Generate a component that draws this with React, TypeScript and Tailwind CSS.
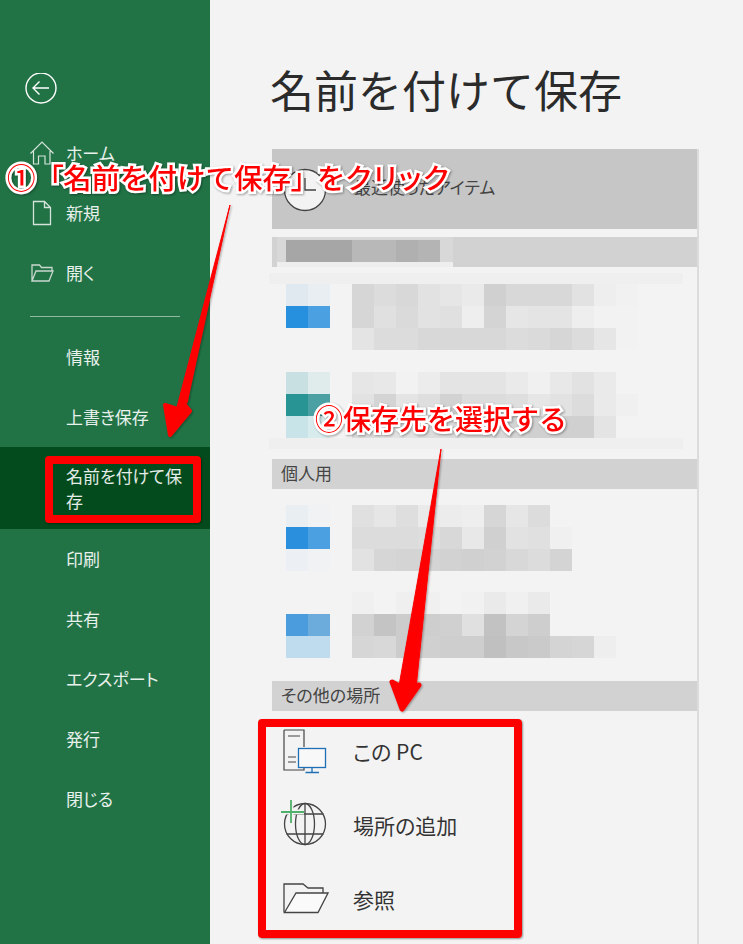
import React from 'react'

const jp = "font-['Noto_Sans_CJK_JP','Noto_Sans',sans-serif]"

const topItems = [
  { label: 'ホーム', icon: <HomeIcon /> },
  { label: '新規', icon: <FileIcon /> },
  { label: '開く', icon: <OpenIcon /> },
]
const bottomItems = ['情報', '上書き保存', '名前を付けて保存', '印刷', '共有', 'エクスポート', '発行', '閉じる']

// pixelated thumbnails and file names, values read off the screenshot
const files = [
  {
    icon: [['#e0e8f0', '#e8eef2'], ['#2690de', '#4aa0e0'], ['#f3f3f3', '#f3f3f3']],
    text: [
      ['d6', 'dc', 'd8', 'e2', 'e6', 'ea', 'd0', 'd8', 'd8', 'd8', 'e2', 'ee', 'f1'],
      ['d6', 'e0', 'da', 'e2', 'e0', 'ee', 'd4', 'e6', 'e4', 'e4', 'ee', 'f2', 'f2'],
      ['e4', 'dc', 'dc', 'd8', 'd8', 'd8', 'd8', 'dc', 'da', 'd6', 'dc', 'e6', 'f2'],
    ],
  },
  {
    icon: [['#c8e0e2', '#e0ecec'], ['#289494', '#4aa0a2'], ['#c8e4e8', '#d8ecee']],
    text: [
      ['e6', 'e8', 'f2', 'ec', 'e4', 'e4', 'e4', 'ea', 'f0', 'e8', 'e2', 'ea', 'f3'],
      ['e2', 'd4', 'e4', 'de', 'd2', 'dc', 'dc', 'de', 'e6', 'e2', 'dc', 'ea', 'f0'],
      ['dc', 'e4', 'e2', 'dc', 'dc', 'd8', 'd8', 'd4', 'd0', 'd0', 'd0', 'e4', 'f3'],
    ],
  },
  {
    icon: [['#e8eef2', '#f0f2f4'], ['#2a90de', '#4aa0e0'], ['#eceff3', '#f0f2f4']],
    text: [
      ['e0', 'e6', 'de', 'ea', 'ec', 'ee', 'd6', 'e6', 'dc'],
      ['dc', 'dc', 'dc', 'de', 'd8', 'e8', 'd0', 'e2', 'e0', 'f0'],
      ['e2', 'd6', 'd4', 'd4', 'd2', 'd0', 'd2', 'd8', 'dc', 'd4'],
    ],
  },
  {
    icon: [['#f3f3f3', '#f3f3f3'], ['#4a9cdc', '#6cacdc'], ['#bedcee', '#bedcee']],
    text: [
      ['f0', 'f3', 'ef', 'f0', 'f3', 'f1', 'ea', 'f0', 'ea'],
      ['d2', 'c4', 'cc', 'ce', 'd0', 'e0', 'c2', 'd4', 'ce'],
      ['d6', 'd8', 'cc', 'd0', 'ce', 'ce', 'c0', 'c8', 'ca', 'd4', 'd6', 'ee'],
    ],
  },
]
const headerCells = ['a6', 'a6', 'a6', 'b8', 'b8', 'b0', 'b4']

function HomeIcon() {
  return (
    <svg width="26" height="26" viewBox="0 0 26 26" fill="none" stroke="#d5e3da" strokeWidth="1.2">
      <path d="M1.5 13.5 13 2l11.5 11.5M4.500 11v13h5v-8h6.500v8h5V11" />
    </svg>
  )
}

function FileIcon() {
  return (
    <svg width="26" height="26" viewBox="0 0 26 26" fill="none" stroke="#d5e3da" strokeWidth="1.3">
      <path d="M4.500 1.500h11l6 6v17h-17zM15.500 1.500v6h6" />
    </svg>
  )
}

function OpenIcon() {
  return (
    <svg width="26" height="26" viewBox="0 0 26 26" fill="none" stroke="#c9d8ce" strokeWidth="1.3">
      <path d="M3 21V5h7.500l2 2.500H23V11M3 21h17l4-10H7z" />
    </svg>
  )
}

function ClockIcon() {
  return (
    <svg width="44" height="44" viewBox="0 0 44 44" fill="#f3f3f3" stroke="#444444" strokeWidth="1.300">
      <circle cx="22" cy="22" r="20.500" />
      <path d="M22 10v12h11" fill="none" />
    </svg>
  )
}

function PcIcon() {
  return (
    <svg width="46" height="46" viewBox="0 0 46 46" fill="none">
      <path d="M1 1h20v17M21 38v3H1V1M5 7h12M5 28h8M5 33h8" stroke="#444444" strokeWidth="1.200" />
      <rect x="15.500" y="19.500" width="27" height="19" fill="#f8f8f8" stroke="#1f6fb5" strokeWidth="1.300" />
      <path d="M29 39v4M22.500 43.500H36" stroke="#1f6fb5" strokeWidth="1.300" />
    </svg>
  )
}

function GlobeIcon() {
  return (
    <svg className="-ml-[2px]" width="50" height="52" viewBox="0 0 50 52" fill="none">
      <g stroke="#444444" strokeWidth="1.300">
        <circle cx="24" cy="24" r="20.500" />
        <ellipse cx="24" cy="24" rx="9.500" ry="20.500" />
        <path d="M24 3.500v41M5.500 14h37M5.500 34h37" />
      </g>
      <path d="M0 12h23M10 0v23" stroke="#f3f3f3" strokeWidth="5" />
      <path d="M0 12h23M10 0v23" stroke="#4fb06a" strokeWidth="1.800" />
    </svg>
  )
}

function FolderIcon() {
  return (
    <svg width="46" height="34" viewBox="0 0 46 34" fill="none" stroke="#444444" strokeWidth="1.300">
      <path d="M1 29.500V1h19l5 4h15v5" />
      <path d="M1.500 29.500 13 10h32L35 29.500z" fill="#fafafa" />
    </svg>
  )
}

function Mosaic({ rows }: { rows: string[][] }) {
  return (
    <div className="flex flex-col">
      {rows.map((row, i) => (
        <div key={i} className="flex h-[22px]">
          {row.map((c, j) => (
            <div key={j} className="w-[22px] h-[22px]" style={{ backgroundColor: c.startsWith('#') ? c : `#${c}${c}${c}` }} />
          ))}
        </div>
      ))}
    </div>
  )
}

function NavItem({ label, icon }: { label: string; icon?: React.ReactNode }) {
  return (
    <div className="h-[60px] flex items-center pb-px text-[17px] text-white/90 relative pl-[66px] [font-feature-settings:'palt']">
      {icon && <span className="absolute left-[29px] top-[17px]">{icon}</span>}
      {label}
    </div>
  )
}

function Sidebar() {
  return (
    <aside className="w-[210px] shrink-0 bg-[#217346] pt-[73px]">
      <div className="pl-[25px] h-[50px]">
        <svg width="32" height="32" viewBox="0 0 32 32" fill="none" stroke="#ffffff" strokeWidth="1.400">
          <circle cx="16" cy="15" r="15" />
          <path d="M24 15H8M14.500 8.500 8 15l6.500 6.500" />
        </svg>
      </div>
      {topItems.map((item) => (
        <NavItem key={item.label} label={item.label} icon={item.icon} />
      ))}
      <div className="mt-[13px] mb-[10px] mx-[30px] h-px bg-[#8fb9a2]" />
      {bottomItems.map((label) =>
        label === '名前を付けて保存' ? (
          <div key={label} className="h-[82px] bg-[#034b1c] flex items-center pl-[66px] pr-[26px] text-[17px] leading-[25px] text-white/90 [font-feature-settings:'palt']">
            {label}
          </div>
        ) : (
          <NavItem key={label} label={label} />
        ),
      )}
    </aside>
  )
}

function SectionHeader({ label }: { label: string }) {
  return <div className="h-[30px] bg-[#d2d2d2] flex items-center pl-[9px] pb-[2px] text-[17px] text-[#444444] [font-feature-settings:'palt']">{label}</div>
}

function FileRow({ file }: { file: (typeof files)[number] }) {
  return (
    <div className="flex gap-[22px] pl-[14px] h-[66px]">
      <Mosaic rows={file.icon} />
      <Mosaic rows={file.text} />
    </div>
  )
}

function BlurBand() {
  return <div className="-ml-[3px] w-[414px] h-[11px] bg-[#efefef]" />
}

function PlaceRow({ icon, label }: { icon: React.ReactNode; label: string }) {
  return (
    <div className="h-[74px] flex items-center">
      <div className="w-[81px] pl-[11px] flex items-center">{icon}</div>
      <span className="text-[21px] text-[#333333] [font-feature-settings:'palt']">{label}</span>
    </div>
  )
}

function Main() {
  return (
    <main className="flex-1 bg-[#f3f3f3] pl-[61px] pt-[56px]">
      <h1 className="-ml-[1px] h-[93px] text-[44px] leading-[66px] font-normal text-[#2b2b2b]">名前を付けて保存</h1>
      <div className="ml-[1px] w-[427px] border-r-2 border-[#dcdcdc] pb-[20px]">
        <div className="h-[80px] bg-[#c6c6c6] flex items-center pl-[11px] gap-[27px] text-[17px] text-[#444444]">
          <span className="pt-[1px]"><ClockIcon /></span>
          <span className="pb-[5px] [font-feature-settings:'palt']">最近使ったアイテム</span>
        </div>
        <div className="mt-[8px] relative">
          <SectionHeader label="" />
          <div className="absolute left-[5px] top-0 w-[176px] h-[30px] bg-[#d8d8d8] overflow-hidden flex flex-col">
            <div className="flex pt-[3px] pl-[9px] h-[25px]">
              {headerCells.map((c, i) => (
                <div key={i} className="w-[22px] h-[22px]" style={{ backgroundColor: `#${c}${c}${c}` }} />
              ))}
            </div>
            <div className="h-[5px] bg-[#eeeeee]" />
          </div>
        </div>
        <div className="mt-[6px]">
          <BlurBand />
        </div>
        <div className="flex flex-col gap-[22px]">
          <FileRow file={files[0]} />
          <FileRow file={files[1]} />
        </div>
        <BlurBand />
        <div className="mt-[10px]">
          <SectionHeader label="個人用" />
        </div>
        <div className="mt-[16px] flex flex-col gap-[21px]">
          <FileRow file={files[2]} />
          <FileRow file={files[3]} />
        </div>
        <div className="mt-[23px]">
          <SectionHeader label="その他の場所" />
        </div>
        <div className="mt-[4px]">
          <PlaceRow icon={<PcIcon />} label="この PC" />
          <PlaceRow icon={<GlobeIcon />} label="場所の追加" />
          <PlaceRow icon={<FolderIcon />} label="参照" />
        </div>
      </div>
    </main>
  )
}

function Arrows() {
  return (
    <svg className="absolute inset-0 pointer-events-none" width="743" height="944" viewBox="0 0 743 944">
      <defs>
        <filter id="sh" x="-20%" y="-20%" width="140%" height="140%">
          <feDropShadow dx="1" dy="1" stdDeviation="0.800" floodColor="#000000" floodOpacity="0.350" />
        </filter>
      </defs>
      <g fill="#ff0000" stroke="#ff0000" strokeLinejoin="round" filter="url(#sh)">
        <path strokeWidth="1" d="M230 205 187 403 177 407z" />
        <path strokeWidth="4" d="M165 405 177.500 409 185 405 190 411 170 435z" />
        <path strokeWidth="1" d="M441 449 416 688 399 686z" />
        <path strokeWidth="5" d="M392 682 403 688 412 686 419 685 402 709z" />
      </g>
    </svg>
  )
}

function Callout({ className, children }: { className: string; children: React.ReactNode }) {
  return (
    <div className={`absolute whitespace-nowrap font-medium text-[#ff0000] [-webkit-text-stroke:5px_white] [paint-order:stroke_fill] [filter:drop-shadow(1px_1px_1px_rgba(0,0,0,0.35))] ${className}`}>
      {children}
    </div>
  )
}

export default function App() {
  return (
    <div className={`relative w-[743px] h-[944px] overflow-hidden flex ${jp}`}>
      <Sidebar />
      <Main />
      <Arrows />
      <div className="absolute left-[45px] top-[456px] w-[156px] h-[67px] border-[8px] border-[#ff0000] rounded-[4px] shadow-[1px_1px_2px_rgba(0,0,0,0.4)]" />
      <div className="absolute left-[258px] top-[719px] w-[264px] h-[219px] border-[8px] border-[#ff0000] rounded-[4px] shadow-[1px_1px_2px_rgba(0,0,0,0.4)]" />
      <Callout className="left-[7px] top-[155px] text-[28.500px] leading-[44px]">
        ①「<span className="-ml-[1px]">名前を付けて保存</span>
        <span className="[font-feature-settings:'palt']">」</span>
        <span className="ml-[12px] tracking-[2px] [font-feature-settings:'palt']">をクリック</span>
      </Callout>
      <Callout className="left-[315px] top-[396px] text-[28px] leading-[44px]">②保存先を選択する</Callout>
    </div>
  )
}
